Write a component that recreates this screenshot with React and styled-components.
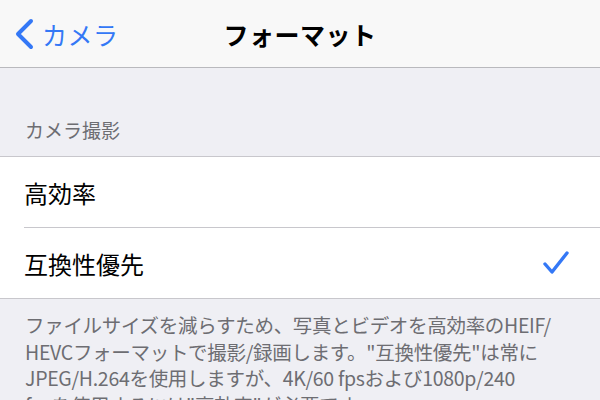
import React from 'react';
import styled, { createGlobalStyle } from 'styled-components';

const GlobalStyle = createGlobalStyle`
  body {
    margin: 0;
    background: #efeff4;
    font-family: "Noto Sans CJK JP", "Noto Sans", sans-serif;
    -webkit-font-smoothing: antialiased;
  }
`;

const Page = styled.div`
  width: 600px;
  height: 400px;
  overflow: hidden;
  background: #efeff4;
`;

const NavBar = styled.header`
  height: 67px;
  background: #f8f8f8;
  border-bottom: 1px solid #b9b9bd;
  display: grid;
  grid-template-columns: 1fr auto 1fr;
  align-items: center;
`;

const BackButton = styled.div`
  display: flex;
  align-items: center;
  gap: 8px;
  padding-left: 14px;
  color: #3478f6;
  font-size: 25px;
  letter-spacing: 0.5px;
`;

const Title = styled.h1`
  margin: 0;
  font-size: 25px;
  font-weight: 700;
  color: #000;
  letter-spacing: 0.5px;
`;

const SectionHeader = styled.div`
  height: 88px;
  display: flex;
  align-items: flex-end;
  padding: 0 25px 13px;
  box-sizing: border-box;
  color: #6d6d72;
  font-size: 19px;
`;

const List = styled.div`
  background: #fff;
  border-top: 1px solid #c8c7cc;
  border-bottom: 1px solid #c8c7cc;
`;

const Row = styled.div`
  height: 70px;
  display: flex;
  align-items: center;
  justify-content: space-between;
  margin-left: 24px;
  padding-right: 30px;
  font-size: 24px;
  color: #000;
  border-top: ${(p) => (p.first ? 'none' : '1px solid #c8c7cc')};
`;

const Footer = styled.div`
  padding: 13px 0 0 25px;
  color: #6d6d72;
  font-size: 19.5px;
  line-height: 26.5px;
  letter-spacing: -0.3px;
`;

const FooterLine = styled.div`
  white-space: nowrap;
`;

const Chevron = () => (
  <svg width="20" height="32" viewBox="0 0 20 32">
    <path d="M17 3 L4 16 L17 29" fill="none" stroke="#3478f6" strokeWidth="4" strokeLinecap="round" strokeLinejoin="round" />
  </svg>
);

const Check = () => (
  <svg width="28" height="26" viewBox="0 0 28 26">
    <path d="M3 14 L10 22 L25 3" fill="none" stroke="#3478f6" strokeWidth="3.4" strokeLinecap="round" strokeLinejoin="round" />
  </svg>
);

const options = [
  { label: '高効率', selected: false },
  { label: '互換性優先', selected: true },
];

const footerLines = [
  'ファイルサイズを減らすため、写真とビデオを高効率のHEIF/',
  'HEVCフォーマットで撮影/録画します。"互換性優先"は常に',
  'JPEG/H.264を使用しますが、4K/60 fpsおよび1080p/240',
  'fpsを使用するには"高効率"が必要です。',
];

const App = () => (
  <Page>
    <GlobalStyle />
    <NavBar>
      <BackButton>
        <Chevron />
        カメラ
      </BackButton>
      <Title>フォーマット</Title>
      <div />
    </NavBar>
    <SectionHeader>カメラ撮影</SectionHeader>
    <List>
      {options.map((o, i) => (
        <Row key={o.label} first={i === 0}>
          {o.label}
          {o.selected && <Check />}
        </Row>
      ))}
    </List>
    <Footer>
      {footerLines.map((line) => (
        <FooterLine key={line}>{line}</FooterLine>
      ))}
    </Footer>
  </Page>
);

export default App;
